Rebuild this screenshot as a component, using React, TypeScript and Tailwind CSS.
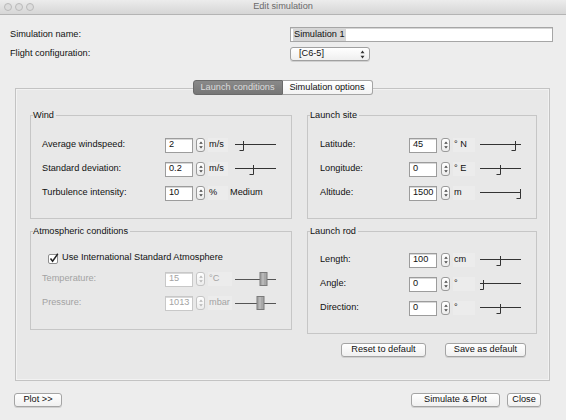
import React from "react";

// small up/down stepper next to each number field
const Spinner: React.FC<{ disabled?: boolean }> = ({ disabled }) => (
  <div
    className={`flex h-[14px] w-[9px] items-center justify-center rounded-[3px] border bg-gradient-to-b from-white to-[#ececec] ${
      disabled ? "border-[#c4c4c4]" : "border-[#9a9a9a]"
    }`}
  >
    <svg width="6" height="10" viewBox="0 0 6 10">
      <path d="M3 1.5 L4.8 3.8 H1.2 Z" fill={disabled ? "#b5b5b5" : "#444"} />
      <path d="M3 8.5 L4.8 6.2 H1.2 Z" fill={disabled ? "#b5b5b5" : "#444"} />
    </svg>
  </div>
);

// java-on-mac slider, drawn tiny
const Slider: React.FC<{ pos: number; disabled?: boolean }> = ({ pos, disabled }) => {
  const t = Math.round(pos * 40) + 0.5;
  if (disabled) {
    return (
      <svg width="41" height="16" viewBox="0 0 41 16">
        <line x1="0" y1="8.5" x2="41" y2="8.5" stroke="#555" />
        <rect x={t - 3.5} y="1.5" width="7" height="13" fill="#a8a8a8" stroke="#7a7a7a" />
        <line x1={t - 0.5} y1="2" x2={t - 0.5} y2="14" stroke="#c8c8c8" />
      </svg>
    );
  }
  return (
    <svg width="42" height="16" viewBox="0 0 42 16">
      <line x1="0" y1="7.5" x2="41" y2="7.5" stroke="#333" />
      <path d={`M${t} 4 V13.5 H${t - 4}`} stroke="#333" fill="none" />
    </svg>
  );
};

const NumField: React.FC<{ value: string; disabled?: boolean }> = ({ value, disabled }) => (
  <div
    className={`flex h-[15px] w-[28px] items-center border bg-white pl-[3px] shadow-[inset_0_1px_0_#d8d8d8] ${
      disabled ? "border-[#c8c8c8] text-[#a3a3a3]" : "border-[#9c9c9c] text-[#111]"
    }`}
  >
    {value}
  </div>
);

const Unit: React.FC<{ text: string; w: string; disabled?: boolean }> = ({ text, w, disabled }) => (
  <div
    className={`flex h-[14px] items-center bg-[#ececec] pl-[1px] ${w} ${
      disabled ? "text-[#a3a3a3]" : "text-[#111]"
    }`}
  >
    {text}
  </div>
);

const GroupBox: React.FC<{ title: string; h: string; children: React.ReactNode }> = ({
  title,
  h,
  children,
}) => (
  <div className={`border border-[#c6c6c6] ${h}`}>
    <div className="-mt-[7px] ml-[2px] h-[12px] w-fit bg-[#e8e8e8] pr-[2px] leading-[12px] text-[#111]">
      {title}
    </div>
    {children}
  </div>
);

const MacButton: React.FC<{ label: string; w: string }> = ({ label, w }) => (
  <button
    className={`flex h-[14px] items-center justify-center rounded-[3px] border border-[#a4a4a4] bg-gradient-to-b from-white to-[#f0f0f0] text-[#111] shadow-[0_1px_0_#d0d0d0] ${w}`}
  >
    {label}
  </button>
);

const windRows = [
  { label: "Average windspeed:", value: "2", unit: "m/s", pos: 0.2 },
  { label: "Standard deviation:", value: "0.2", unit: "m/s", pos: 0.45 },
];

const siteRows = [
  { label: "Latitude:", value: "45", unit: "° N", pos: 0.875 },
  { label: "Longitude:", value: "0", unit: "° E", pos: 0.5 },
  { label: "Altitude:", value: "1500", unit: "m", pos: 1 },
];

const rodRows = [
  { label: "Length:", value: "100", unit: "cm", pos: 0.5 },
  { label: "Angle:", value: "0", unit: "°", pos: 0.08 },
  { label: "Direction:", value: "0", unit: "°", pos: 0.5 },
];

export default function App() {
  return (
    <div className="flex h-[420px] w-[566px] flex-col overflow-hidden bg-[#ededed] font-['Liberation_Sans',Arial,sans-serif] text-[9.2px] leading-none text-[#111]">
      {/* title bar */}
      <div className="flex h-[15px] shrink-0 items-center border-b border-[#b4b4b4] bg-gradient-to-b from-[#ececec] to-[#d6d6d6]">
        <div className="flex w-[60px] gap-[3px] pl-[4px]">
          <span className="h-[8px] w-[8px] rounded-full border border-[#b9b9b9] bg-[#dcdcdc]" />
          <span className="h-[8px] w-[8px] rounded-full border border-[#b9b9b9] bg-[#dcdcdc]" />
          <span className="h-[8px] w-[8px] rounded-full border border-[#b9b9b9] bg-[#dcdcdc]" />
        </div>
        <div className="flex-1 pr-[60px] text-center text-[#6a6a6a]">Edit simulation</div>
      </div>

      {/* name / config */}
      <div className="mt-[12px] flex h-[15px] items-center">
        <div className="w-[290px] pl-[10px]">Simulation name:</div>
        <div className="flex h-[15px] w-[263px] items-center border border-[#a6a6a6] bg-white pl-[2px] shadow-[inset_0_1px_0_#d6d6d6]">
          <span className="bg-[#d6d6d6] px-[1px] py-[2px]">Simulation 1</span>
        </div>
      </div>
      <div className="mt-[5px] flex h-[14px] items-center">
        <div className="w-[290px] pl-[10px]">Flight configuration:</div>
        <div className="flex h-[14px] w-[80px] items-center justify-between rounded-[3px] border border-[#a0a0a0] bg-gradient-to-b from-white to-[#efefef] pl-[8px] pr-[4px] shadow-[0_1px_0_#d0d0d0]">
          <span>[C6-5]</span>
          <svg width="5" height="9" viewBox="0 0 5 9">
            <path d="M2.5 0.5 L4.5 3.3 H0.5 Z" fill="#333" />
            <path d="M2.5 8.5 L4.5 5.7 H0.5 Z" fill="#333" />
          </svg>
        </div>
      </div>

      {/* tabs */}
      <div className="relative z-10 mt-[19px] flex h-[15px] justify-center pr-[1px]">
        <div className="flex h-[15px] w-[90px] items-center justify-center rounded-l-[3px] border border-[#6a6a6a] bg-gradient-to-b from-[#8a8a8a] to-[#767676] text-[#dcdcdc]">
          Launch conditions
        </div>
        <div className="flex h-[15px] w-[90px] items-center justify-center rounded-r-[3px] border border-l-0 border-[#a4a4a4] bg-gradient-to-b from-white to-[#f3f3f3] text-[#111]">
          Simulation options
        </div>
      </div>

      {/* tab panel */}
      <div className="-mt-[7px] ml-[15px] flex h-[293px] w-[535px] flex-col border border-[#c3c3c3] bg-[#e8e8e8] pl-[14px] pr-[12px] pt-[26px] shadow-[inset_0_0_0_1px_#f2f2f2]">
        <div className="flex items-start gap-[15px]">
          {/* left column */}
          <div className="flex w-[262px] flex-col gap-[12px]">
            <GroupBox title="Wind" h="h-[104px]">
              <div className="mt-[16px] flex flex-col gap-[8px] pl-[11px]">
                {windRows.map((r) => (
                  <div key={r.label} className="flex h-[16px] items-center">
                    <div className="w-[123px]">{r.label}</div>
                    <NumField value={r.value} />
                    <div className="ml-[3px]">
                      <Spinner />
                    </div>
                    <div className="ml-[3px]">
                      <Unit text={r.unit} w="w-[20px]" />
                    </div>
                    <div className="ml-[7px]">
                      <Slider pos={r.pos} />
                    </div>
                  </div>
                ))}
                <div className="flex h-[16px] items-center">
                  <div className="w-[123px]">Turbulence intensity:</div>
                  <NumField value="10" />
                  <div className="ml-[3px]">
                    <Spinner />
                  </div>
                  <div className="ml-[3px]">
                    <Unit text="%" w="w-[20px]" />
                  </div>
                  <div className="ml-[2px]">Medium</div>
                </div>
              </div>
            </GroupBox>

            <GroupBox title="Atmospheric conditions" h="h-[99px]">
              <div className="mt-[14px] flex h-[14px] items-center pl-[17px]">
                <svg width="11" height="11" viewBox="0 0 11 11">
                  <rect x="0.5" y="1.5" width="9" height="9" rx="1.5" fill="#fff" stroke="#8e8e8e" />
                  <path d="M2.5 5.5 L4.6 8.3 L9.8 0.8" stroke="#222" strokeWidth="1.5" fill="none" />
                </svg>
                <span className="ml-[3px]">Use International Standard Atmosphere</span>
              </div>
              <div className="mt-[6px] flex flex-col gap-[8px] pl-[11px] text-[#a3a3a3]">
                {[
                  { label: "Temperature:", value: "15", unit: "°C", pos: 0.7 },
                  { label: "Pressure:", value: "1013", unit: "mbar", pos: 0.62 },
                ].map((r) => (
                  <div key={r.label} className="flex h-[16px] items-center">
                    <div className="w-[123px]">{r.label}</div>
                    <NumField value={r.value} disabled />
                    <div className="ml-[3px]">
                      <Spinner disabled />
                    </div>
                    <div className="ml-[3px]">
                      <Unit text={r.unit} w="w-[24px]" disabled />
                    </div>
                    <div className="ml-[3px]">
                      <Slider pos={r.pos} disabled />
                    </div>
                  </div>
                ))}
              </div>
            </GroupBox>
          </div>

          {/* right column */}
          <div className="flex w-[230px] flex-col gap-[12px]">
            <GroupBox title="Launch site" h="h-[104px]">
              <div className="mt-[16px] flex flex-col gap-[8px] pl-[12px]">
                {siteRows.map((r) => (
                  <div key={r.label} className="flex h-[16px] items-center">
                    <div className="w-[89px]">{r.label}</div>
                    <NumField value={r.value} />
                    <div className="ml-[4px]">
                      <Spinner />
                    </div>
                    <div className="ml-[3px]">
                      <Unit text={r.unit} w="w-[22px]" />
                    </div>
                    <div className="ml-[5px]">
                      <Slider pos={r.pos} />
                    </div>
                  </div>
                ))}
              </div>
            </GroupBox>

            <GroupBox title="Launch rod" h="h-[103px]">
              <div className="mt-[15px] flex flex-col gap-[8px] pl-[12px]">
                {rodRows.map((r) => (
                  <div key={r.label} className="flex h-[16px] items-center">
                    <div className="w-[89px]">{r.label}</div>
                    <NumField value={r.value} />
                    <div className="ml-[4px]">
                      <Spinner />
                    </div>
                    <div className="ml-[3px]">
                      <Unit text={r.unit} w="w-[22px]" />
                    </div>
                    <div className="ml-[5px]">
                      <Slider pos={r.pos} />
                    </div>
                  </div>
                ))}
              </div>
            </GroupBox>
          </div>
        </div>

        <div className="mt-[9px] flex justify-end gap-[19px] pr-[11px]">
          <MacButton label="Reset to default" w="w-[85px]" />
          <MacButton label="Save as default" w="w-[81px]" />
        </div>
      </div>

      {/* bottom buttons */}
      <div className="mt-[12px] flex items-center px-[14px] pr-[25px]">
        <MacButton label="Plot >>" w="w-[48px]" />
        <div className="flex-1" />
        <MacButton label="Simulate & Plot" w="w-[89px]" />
        <div className="ml-[7px]">
          <MacButton label="Close" w="w-[34px]" />
        </div>
      </div>
    </div>
  );
}
